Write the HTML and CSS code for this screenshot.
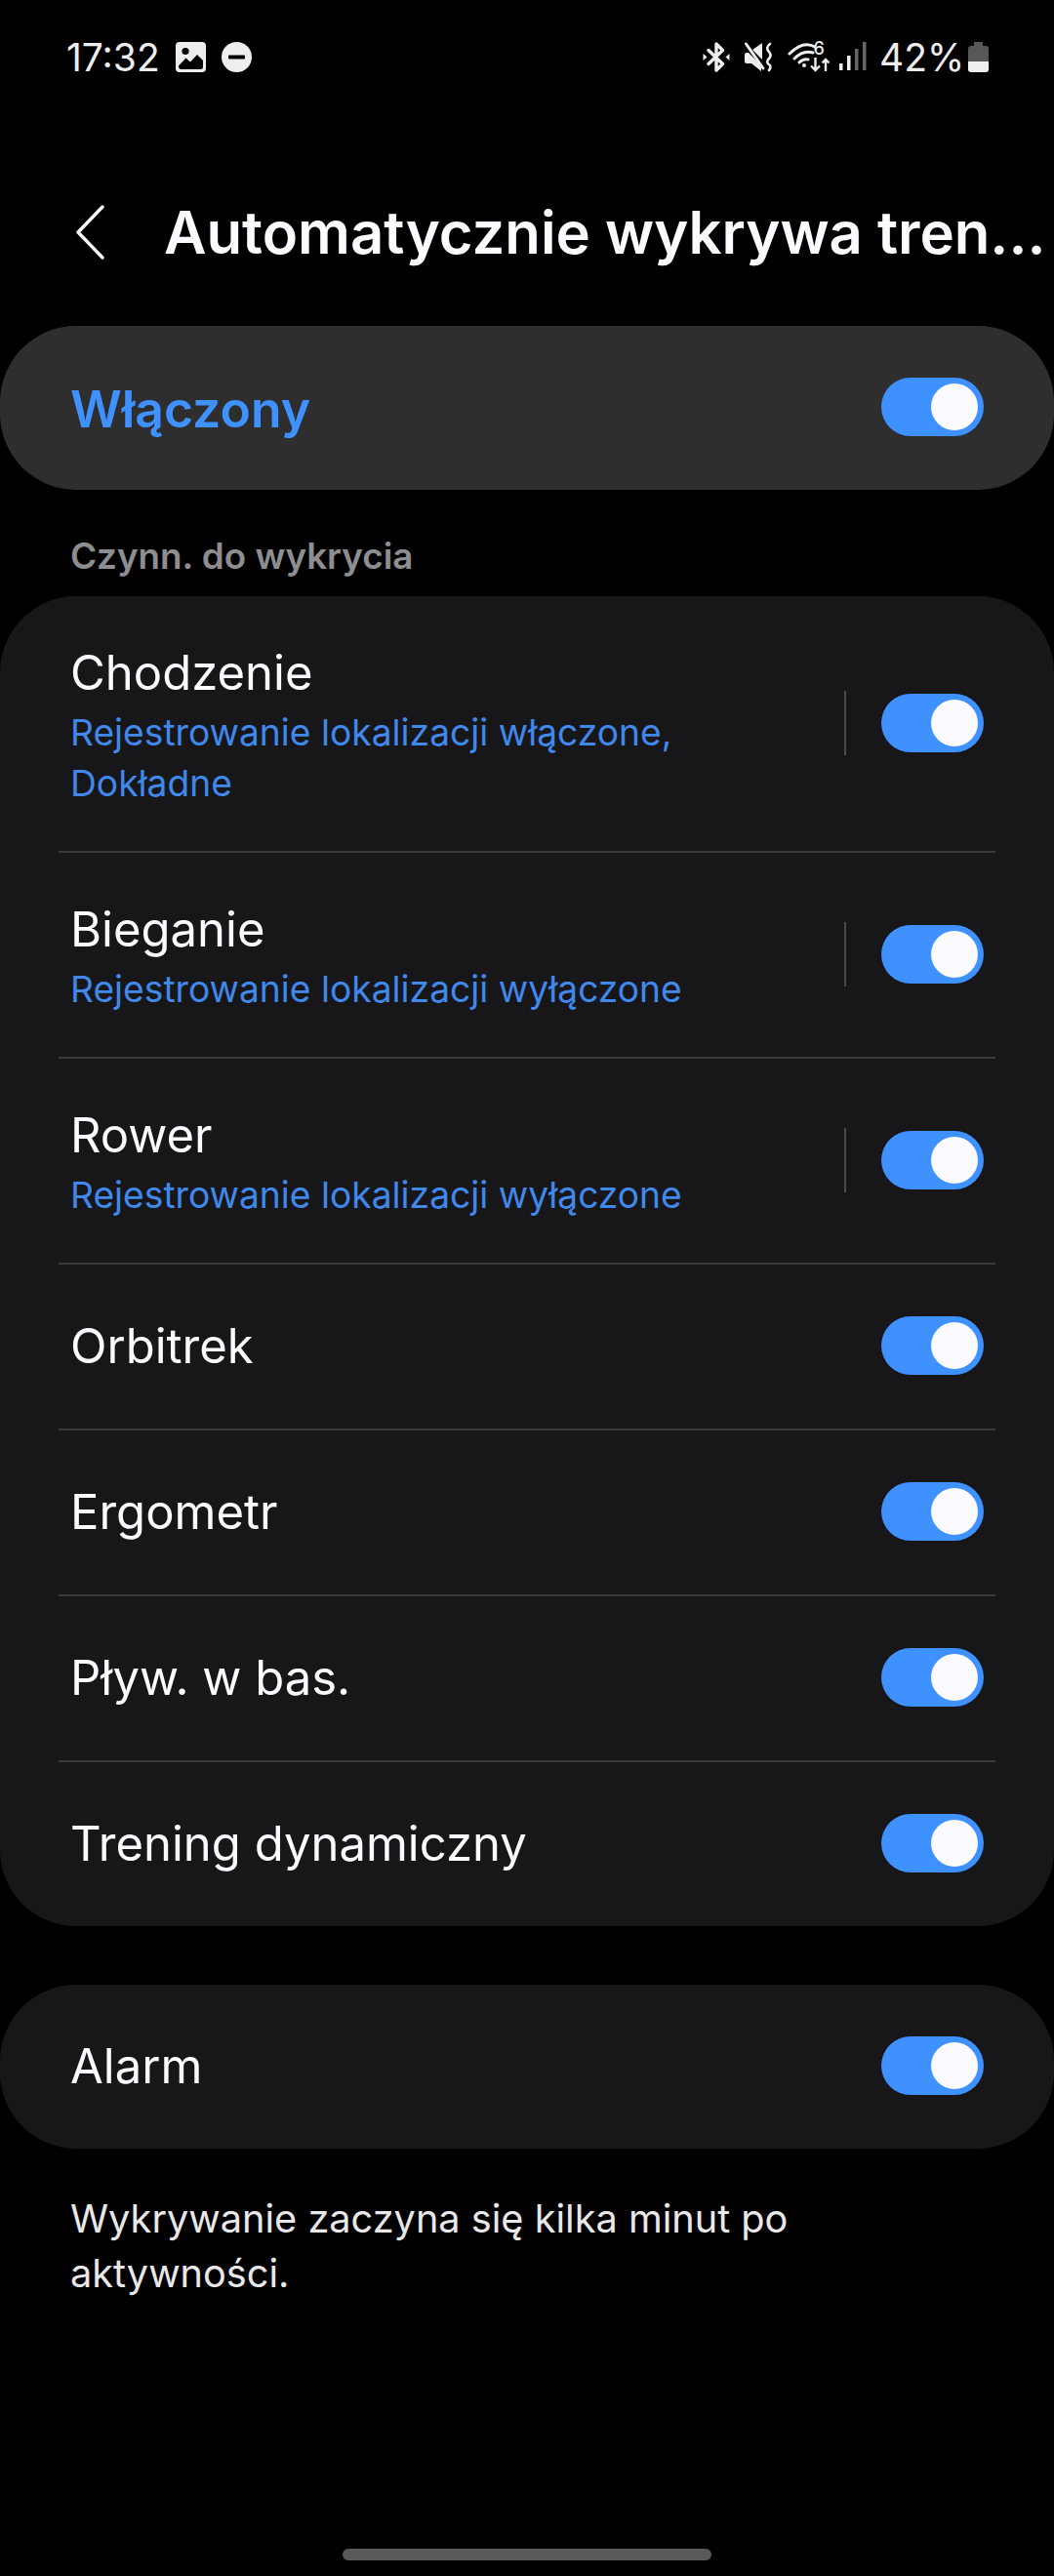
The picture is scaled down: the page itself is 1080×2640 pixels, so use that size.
FILE: index.html
```html
<!DOCTYPE html>
<html lang="pl">
<head>
    <meta charset="UTF-8">
    <meta name="viewport" content="width=device-width, initial-scale=1.0">
    <title>Trening</title>
    <link rel="stylesheet" href="styles.css">
</head>
<body>
<div class="status-bar">
    <div class="status-left">
        <span class="status-time">17:32</span>
        <svg class="icon-picture" width="31" height="31" viewBox="0 0 31 31">
            <rect width="31" height="31" rx="4" fill="#eee"/>
            <circle cx="10" cy="9.5" r="3.6" fill="#000"/>
            <path d="M3 24.5 L10.5 16.5 L15 20.5 L22 13 L28 19 V25.5 Q28 28 25.5 28 H5.5 Q3 28 3 24.5 Z" fill="#000"/>
        </svg>
        <svg class="icon-dnd" width="31" height="31" viewBox="0 0 31 31">
            <circle cx="15.5" cy="15.5" r="15.5" fill="#eee"/>
            <rect x="7" y="13.5" width="17" height="4" rx="1" fill="#000"/>
        </svg>
    </div>
    <div class="status-right">
        <svg class="icon-bt" width="28" height="31" viewBox="0 0 28 31">
            <path d="M6 8.5 L20.5 22.5 L14 29 V2 L20.5 8.5 L6 22.5" fill="none" stroke="#eee" stroke-width="3.4" stroke-linejoin="round" stroke-linecap="round"/>
            <path d="M0.5 12 L4.5 15.5 L0.5 19 Z M27.5 12 L23.5 15.5 L27.5 19 Z" fill="#eee"/>
        </svg>
        <svg class="icon-mute" width="29" height="31" viewBox="0 0 29 31">
            <path d="M0 13 Q0 11 2 11 H4 L17 24 V30 L7 22 H2 Q0 22 0 20 Z M8 8 L18 1 V18 Z" fill="#eee"/>
            <path d="M1.5 2 L19 27" stroke="#eee" stroke-width="3" stroke-linecap="round"/>
            <path d="M26 2 Q21 6 25 10 Q28 14 25 17 Q21 21 26 24 Q27 27 25 29" fill="none" stroke="#eee" stroke-width="2.6" stroke-linecap="round"/>
        </svg>
        <svg class="icon-wifi" width="44" height="32" viewBox="0 0 44 32">
            <path d="M2 13 Q16 -1 28 6" fill="none" stroke="#eee" stroke-width="3" stroke-linecap="round"/>
            <path d="M7 18 Q16 9 26 12" fill="none" stroke="#eee" stroke-width="3" stroke-linecap="round"/>
            <path d="M12 22 Q16 18 21 19" fill="none" stroke="#eee" stroke-width="3" stroke-linecap="round"/>
            <circle cx="17" cy="25" r="2" fill="#eee"/>
            <text x="26.5" y="14" class="wifi-six">6</text>
            <path d="M28.5 17 V30 M24 25.5 L28.5 30 L33 25.5 M39 31 V19 M35.5 22.5 L39 19 L42.5 22.5" fill="none" stroke="#eee" stroke-width="2.4"/>
        </svg>
        <svg class="icon-signal" width="28" height="30" viewBox="0 0 28 30">
            <rect x="0" y="22" width="3.5" height="7" fill="#eee"/>
            <rect x="8" y="14" width="3.5" height="15" fill="#eee"/>
            <rect x="16" y="7" width="3.5" height="22" fill="#666"/>
            <rect x="24" y="0" width="3.5" height="29" fill="#666"/>
        </svg>
        <span class="status-battery">42%</span>
        <svg class="icon-battery" width="21" height="31" viewBox="0 0 21 31">
            <path d="M6 0 H15 V4 H18 Q21 4 21 7 V20 H0 V7 Q0 4 3 4 H6 Z" fill="#575757"/>
            <path d="M0 20 H21 V28 Q21 31 18 31 H3 Q0 31 0 28 Z" fill="#eee"/>
        </svg>
    </div>
</div>

<div class="top-bar">
    <svg class="back-icon" width="30" height="56" viewBox="0 0 30 56">
        <path d="M27 2 L2 28 L27 54" fill="none" stroke="#fafaff" stroke-width="3.4" stroke-linecap="round" stroke-linejoin="round"/>
    </svg>
    <h1>Automatycznie wykrywa tren...</h1>
</div>

<div class="master-card">
    <span class="master-label">Włączony</span>
    <span class="toggle"></span>
</div>

<h2 class="section-title">Czynn. do wykrycia</h2>

<div class="card">
    <div class="row row-three">
        <div class="row-text">
            <div class="row-title">Chodzenie</div>
            <div class="row-sub">Rejestrowanie lokalizacji włączone,<br>Dokładne</div>
        </div>
        <span class="row-sep"></span>
        <span class="toggle"></span>
    </div>
    <div class="divider"></div>
    <div class="row row-two">
        <div class="row-text">
            <div class="row-title">Bieganie</div>
            <div class="row-sub">Rejestrowanie lokalizacji wyłączone</div>
        </div>
        <span class="row-sep"></span>
        <span class="toggle"></span>
    </div>
    <div class="divider"></div>
    <div class="row row-two">
        <div class="row-text">
            <div class="row-title">Rower</div>
            <div class="row-sub">Rejestrowanie lokalizacji wyłączone</div>
        </div>
        <span class="row-sep"></span>
        <span class="toggle"></span>
    </div>
    <div class="divider"></div>
    <div class="row">
        <div class="row-title">Orbitrek</div>
        <span class="toggle"></span>
    </div>
    <div class="divider"></div>
    <div class="row">
        <div class="row-title">Ergometr</div>
        <span class="toggle"></span>
    </div>
    <div class="divider"></div>
    <div class="row">
        <div class="row-title">Pływ. w bas.</div>
        <span class="toggle"></span>
    </div>
    <div class="divider"></div>
    <div class="row">
        <div class="row-title">Trening dynamiczny</div>
        <span class="toggle"></span>
    </div>
</div>

<div class="card alarm-card">
    <div class="row">
        <div class="row-title">Alarm</div>
        <span class="toggle"></span>
    </div>
</div>

<p class="footnote">Wykrywanie zaczyna się kilka minut po<br>aktywności.</p>

<div class="home-bar"></div>
</body>
</html>
```

FILE: styles.css
```css
* {
    box-sizing: border-box;
}

body {
    font-family: Inter, "Noto Sans", sans-serif;
    background-color: #000;
    color: #fafaff;
    margin: 0;
    width: 1080px;
    height: 2640px;
    overflow: hidden;
}

.status-bar {
    display: flex;
    justify-content: space-between;
    align-items: center;
    height: 116px;
    padding: 0 67px 0 68px;
}

.status-left,
.status-right {
    display: flex;
    align-items: center;
}

.status-time,
.status-battery {
    font-size: 39px;
    color: #eee;
    line-height: 1;
}

.status-time {
    width: 112px;
}

.icon-dnd {
    margin-left: 16px;
}

.icon-mute,
.icon-wifi {
    margin-left: 15px;
}

.icon-signal {
    margin-left: 9px;
}

.status-battery {
    margin-left: 13px;
    width: 91px;
}

.wifi-six {
    font-family: Inter, sans-serif;
    font-size: 18px;
    font-weight: 500;
    fill: #eee;
}

.top-bar {
    display: flex;
    align-items: center;
    height: 218px;
    padding: 26px 0 0 78px;
}

.back-icon {
    flex: none;
}

.top-bar h1 {
    margin: 0 0 0 60px;
    font-size: 59.8px;
    font-weight: 600;
    white-space: nowrap;
}

.master-card {
    display: flex;
    justify-content: space-between;
    align-items: center;
    height: 168px;
    padding: 0 72px;
    background-color: #2e2e2e;
    border-radius: 78px;
}

.master-label {
    padding-top: 2px;
    font-size: 51.7px;
    font-weight: 600;
    color: #3e91ff;
}

.section-title {
    margin: 0;
    height: 109px;
    padding: 44px 0 0 72px;
    font-size: 36.8px;
    line-height: 48px;
    font-weight: 600;
    color: #8e8e90;
}

.card {
    background-color: #17171a;
    border-radius: 78px;
}

.row {
    display: flex;
    align-items: center;
    height: 168px;
    padding: 0 72px;
}

.row-two {
    height: 209px;
}

.row-three {
    height: 261px;
}

.row-text,
.row > .row-title {
    flex: 1;
}

.row-text {
    padding-top: 6px;
}

.row-title {
    font-size: 49px;
    line-height: 58px;
}

.row-sub {
    margin-top: 6px;
    font-size: 37.2px;
    line-height: 52px;
    color: #4088ea;
}

.row-sep {
    width: 2px;
    height: 66px;
    margin: 0 36px 2px 0;
    background-color: #48484a;
}

.divider {
    height: 2px;
    margin: 0 60px;
    background-color: #3a3a3c;
}

.toggle {
    position: relative;
    flex: none;
    width: 105px;
    height: 60px;
    margin-bottom: 2px;
    border-radius: 30px;
    background-color: #3e91ff;
}

.toggle::after {
    content: "";
    position: absolute;
    top: 6px;
    right: 6px;
    width: 48px;
    height: 48px;
    border-radius: 50%;
    background-color: #fafaff;
}

.alarm-card {
    margin-top: 60px;
}

.footnote {
    margin: 44px 0 0;
    padding-left: 72px;
    font-size: 39.7px;
    line-height: 56px;
    color: #e8e8e8;
}

.home-bar {
    position: absolute;
    left: 351px;
    top: 2612px;
    width: 378px;
    height: 12px;
    border-radius: 6px;
    background-color: #5a5a5a;
}
```
